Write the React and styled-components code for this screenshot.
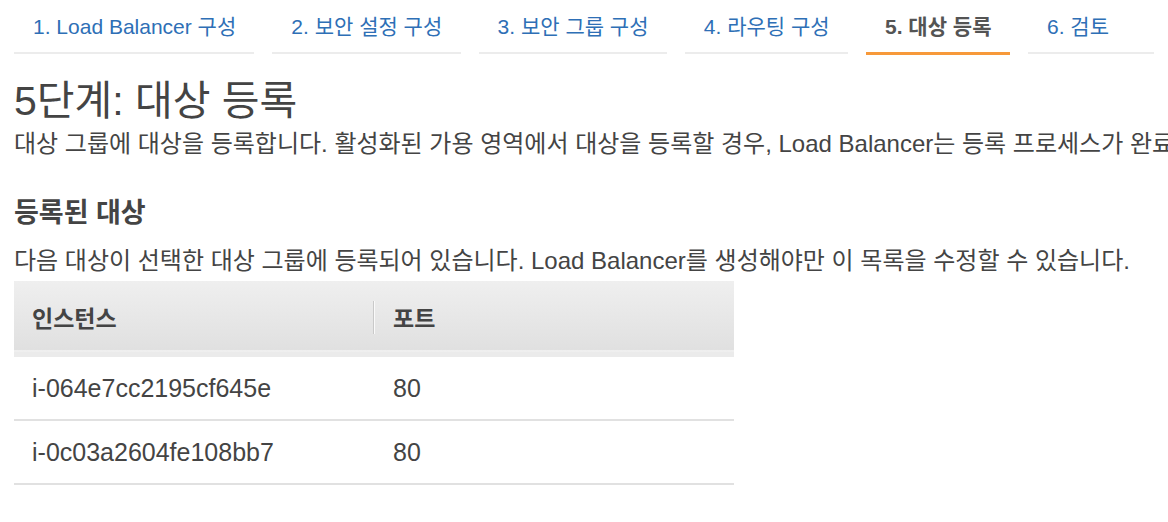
import React from 'react';
import styled, { createGlobalStyle } from 'styled-components';

const GlobalStyle = createGlobalStyle`
    html, body {
        margin: 0;
        padding: 0;
        background: #fff;
        overflow: hidden;
    }
    body {
        font-family: "Liberation Sans", "Noto Sans CJK KR", sans-serif;
        color: #444;
    }
`

const steps = [
    { label: '1. Load Balancer 구성' },
    { label: '2. 보안 설정 구성' },
    { label: '3. 보안 그룹 구성' },
    { label: '4. 라우팅 구성' },
    { label: '5. 대상 등록', active: true },
    { label: '6. 검토' },
];

const targets = [
    { id: 'i-064e7cc2195cf645e', port: 80 },
    { id: 'i-0c03a2604fe108bb7', port: 80 },
];

const App = () => {
    return (
        <Page>
            <GlobalStyle />
            <Steps>
                {steps.map((s) => (
                    <Step key={s.label} $active={s.active}>{s.label}</Step>
                ))}
            </Steps>

            <Title>5단계: 대상 등록</Title>
            <Desc>대상 그룹에 대상을 등록합니다. 활성화된 가용 영역에서 대상을 등록할 경우, Load Balancer는 등록 프로세스가 완료</Desc>

            <SubTitle>등록된 대상</SubTitle>
            <SubDesc>다음 대상이 선택한 대상 그룹에 등록되어 있습니다. Load Balancer를 생성해야만 이 목록을 수정할 수 있습니다.</SubDesc>

            <Table>
                <thead>
                    <tr>
                        <Th $first>인스턴스</Th>
                        <Th>포트</Th>
                    </tr>
                </thead>
                <tbody>
                    {targets.map((t) => (
                        <tr key={t.id}>
                            <Td $first>{t.id}</Td>
                            <Td>{t.port}</Td>
                        </tr>
                    ))}
                </tbody>
            </Table>
        </Page>
    )
};

const Page = styled.div`
    padding: 0 14px;
`

const Steps = styled.ul`
    display: flex;
    gap: 18px;
    margin: 0;
    padding: 0;
    list-style: none;
`

const Step = styled.li`
    min-width: 88px;
    padding: 15px 19px 13px 19px;
    font-size: 21px;
    line-height: 24px;
    white-space: nowrap;
    color: ${(p) => (p.$active ? '#545454' : '#2e6fb6')};
    font-weight: ${(p) => (p.$active ? 700 : 400)};
    border-bottom: ${(p) => (p.$active ? '3px solid #f7993a' : '2px solid #ececec')};
    margin-bottom: ${(p) => (p.$active ? '-1px' : '0')};
`

const Title = styled.h1`
    margin: 24px 0 0;
    font-size: 41px;
    line-height: 46px;
    font-weight: 400;
    color: #444;
`

const Desc = styled.p`
    margin: 6px 0 0;
    font-size: 24px;
    line-height: 28px;
    white-space: nowrap;
    color: #444;
`

const SubTitle = styled.h2`
    margin: 39px 0 0;
    font-size: 27px;
    line-height: 32px;
    font-weight: 700;
    color: #444;
`

const SubDesc = styled.p`
    margin: 18px 0 0;
    font-size: 24px;
    line-height: 28px;
    white-space: nowrap;
    color: #444;
`

const Table = styled.table`
    margin-top: 6px;
    width: 720px;
    border-collapse: collapse;
    tbody tr {
        border-bottom: 2px solid #e1e1e1;
    }
    thead tr {
        background: linear-gradient(#efefef, #e0e0e0);
        border-bottom: 5px solid #ebebeb;
    }
`

const Th = styled.th`
    position: relative;
    height: 71px;
    padding: 0 0 0 ${(p) => (p.$first ? '18px' : '20px')};
    width: ${(p) => (p.$first ? '341px' : 'auto')};
    text-align: left;
    font-size: 23px;
    font-weight: 700;
    color: #444;
    &::before {
        content: ${(p) => (p.$first ? 'none' : "''")};
        position: absolute;
        left: 0;
        top: 20px;
        height: 33px;
        width: 1px;
        background: #c9c9c9;
        box-shadow: 1px 0 0 #fafafa;
    }
`

const Td = styled.td`
    height: 62px;
    padding: 0 0 0 ${(p) => (p.$first ? '18px' : '20px')};
    font-size: 25px;
    color: #444;
`

export default App;
